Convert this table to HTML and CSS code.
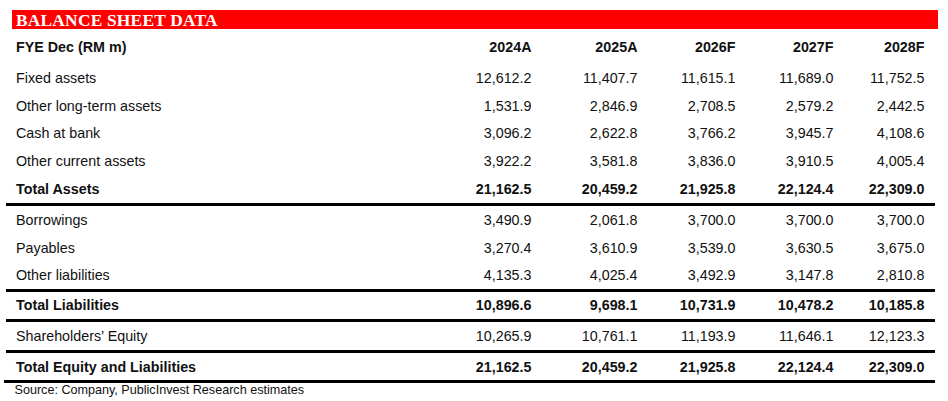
FILE: index.html
```html
<!DOCTYPE html>
<html lang="en">
<head>
<meta charset="utf-8">
<title>Balance Sheet Data</title>
<link rel="stylesheet" href="styles.css">
</head>
<body>
<div class="page">
  <div class="title-bar">BALANCE SHEET DATA</div>
  <div class="sheet">
    <div class="row head bold">
      <div class="label">FYE Dec (RM m)</div>
      <div class="num">2024A</div><div class="num">2025A</div><div class="num">2026F</div><div class="num">2027F</div><div class="num">2028F</div>
    </div>
    <div class="row">
      <div class="label">Fixed assets</div>
      <div class="num">12,612.2</div><div class="num">11,407.7</div><div class="num">11,615.1</div><div class="num">11,689.0</div><div class="num">11,752.5</div>
    </div>
    <div class="row">
      <div class="label">Other long-term assets</div>
      <div class="num">1,531.9</div><div class="num">2,846.9</div><div class="num">2,708.5</div><div class="num">2,579.2</div><div class="num">2,442.5</div>
    </div>
    <div class="row">
      <div class="label">Cash at bank</div>
      <div class="num">3,096.2</div><div class="num">2,622.8</div><div class="num">3,766.2</div><div class="num">3,945.7</div><div class="num">4,108.6</div>
    </div>
    <div class="row">
      <div class="label">Other current assets</div>
      <div class="num">3,922.2</div><div class="num">3,581.8</div><div class="num">3,836.0</div><div class="num">3,910.5</div><div class="num">4,005.4</div>
    </div>
    <div class="row bold">
      <div class="label">Total Assets</div>
      <div class="num">21,162.5</div><div class="num">20,459.2</div><div class="num">21,925.8</div><div class="num">22,124.4</div><div class="num">22,309.0</div>
    </div>
    <div class="rule"></div>
    <div class="row">
      <div class="label">Borrowings</div>
      <div class="num">3,490.9</div><div class="num">2,061.8</div><div class="num">3,700.0</div><div class="num">3,700.0</div><div class="num">3,700.0</div>
    </div>
    <div class="row">
      <div class="label">Payables</div>
      <div class="num">3,270.4</div><div class="num">3,610.9</div><div class="num">3,539.0</div><div class="num">3,630.5</div><div class="num">3,675.0</div>
    </div>
    <div class="row">
      <div class="label">Other liabilities</div>
      <div class="num">4,135.3</div><div class="num">4,025.4</div><div class="num">3,492.9</div><div class="num">3,147.8</div><div class="num">2,810.8</div>
    </div>
    <div class="rule"></div>
    <div class="row bold row-tl">
      <div class="label">Total Liabilities</div>
      <div class="num">10,896.6</div><div class="num">9,698.1</div><div class="num">10,731.9</div><div class="num">10,478.2</div><div class="num">10,185.8</div>
    </div>
    <div class="rule"></div>
    <div class="row row-se">
      <div class="label">Shareholders’ Equity</div>
      <div class="num">10,265.9</div><div class="num">10,761.1</div><div class="num">11,193.9</div><div class="num">11,646.1</div><div class="num">12,123.3</div>
    </div>
    <div class="rule"></div>
    <div class="row bold row-te">
      <div class="label">Total Equity and Liabilities</div>
      <div class="num">21,162.5</div><div class="num">20,459.2</div><div class="num">21,925.8</div><div class="num">22,124.4</div><div class="num">22,309.0</div>
    </div>
    <div class="rule rule-end"></div>
  </div>
  <div class="source">Source: Company, PublicInvest Research estimates</div>
</div>
</body>
</html>
```

FILE: styles.css
```css
html, body {
  margin: 0;
  padding: 0;
  background: #ffffff;
}

.page {
  width: 948px;
  height: 401px;
  padding-top: 10px;
  box-sizing: border-box;
  font-family: "Liberation Sans", Arial, sans-serif;
  color: #111111;
  overflow: hidden;
}

.title-bar {
  margin-left: 12px;
  width: 926px;
  height: 19px;
  box-sizing: border-box;
  padding-left: 4px;
  padding-top: 1px;
  background: #ff0000;
  color: #ffffff;
  font-family: "Liberation Serif", "Times New Roman", serif;
  font-weight: bold;
  font-size: 17.4px;
  letter-spacing: 0.2px;
  line-height: 19px;
  white-space: nowrap;
  overflow: hidden;
}

.sheet {
  margin-left: 6px;
  width: 929px;
}

.row {
  display: grid;
  grid-template-columns: 1fr 100px 106px 98px 98px 91px;
  padding: 0 10.5px 0 10px;
  height: 27.8px;
  line-height: 29px;
  font-size: 14.3px;
  white-space: nowrap;
}

.row.head {
  height: 34.9px;
  line-height: 36px;
}

.row-tl {
  height: 26.7px;
  line-height: 27.7px;
}

.row-se {
  height: 28px;
  line-height: 29px;
}

.row-te {
  height: 27.5px;
  line-height: 28.5px;
}

.bold {
  font-weight: bold;
}

.num {
  text-align: right;
}

.rule {
  height: 3px;
  background: #000000;
}

.rule-end {
  margin-left: -2px;
}

.source {
  margin-left: 14.5px;
  font-size: 12.6px;
  line-height: 15px;
  white-space: nowrap;
}
```
